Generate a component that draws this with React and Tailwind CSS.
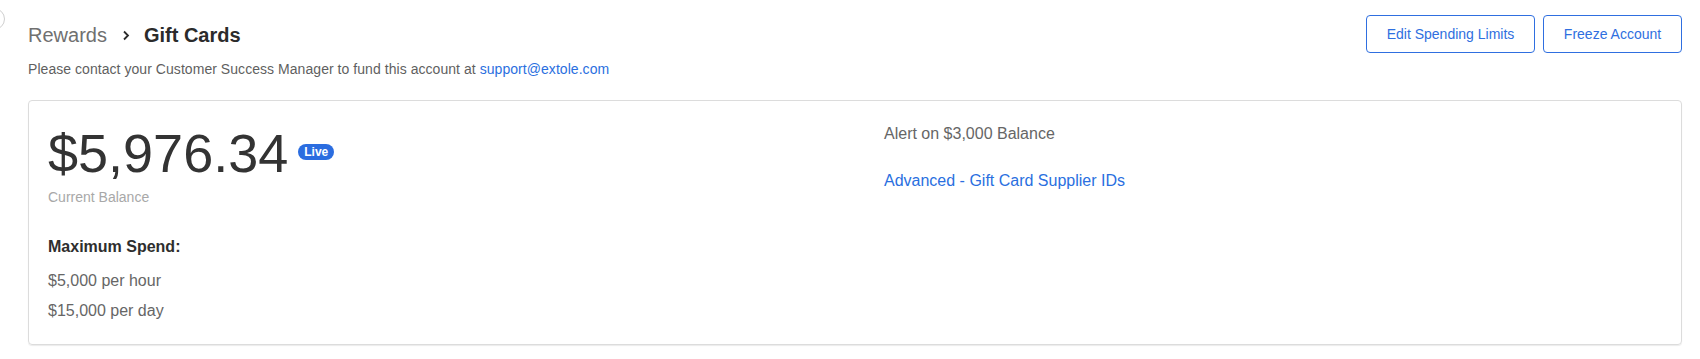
import React from 'react'

function Chevron() {
  return (
    <svg width="8" height="11" viewBox="0 0 8 11" className="ml-[15px] mr-[14px] mt-[1px]" aria-hidden="true">
      <path d="M2 1.5 L6 5.5 L2 9.5" fill="none" stroke="#2b2b2b" strokeWidth="1.8" />
    </svg>
  )
}

function App() {
  return (
    <div className="relative min-h-[359px] w-[1700px] bg-white font-['Liberation_Sans',Arial,sans-serif]">
      {/* <!-- collapse handle --> */}
      <div className="absolute left-[-17px] top-[8px] h-[22px] w-[22px] rounded-full border border-[#cfcfcf] bg-white" />

      <div className="pl-[28px] pr-[18px] pt-[15px]">
        {/* <!-- Header --> */}
        <div className="flex items-start justify-between">
          <div className="pt-[6px]">
            <div className="flex items-center text-[20px] leading-[28px]">
              <span className="text-[#707070]">Rewards</span>
              <Chevron />
              <span className="font-semibold text-[#2b2b2b]">Gift Cards</span>
            </div>
            <p className="mt-[10px] text-[14px] leading-[20px] tracking-[0.05px] text-[#5f5f5f]">
              Please contact your Customer Success Manager to fund this account at{' '}
              <a className="text-[#2a6fe0]">support@extole.com</a>
            </p>
          </div>
          <div className="flex gap-[8px]">
            <button className="h-[38px] w-[169px] rounded-[4px] border border-[#2f6fe0] text-[14px] text-[#2f6fe0]">
              Edit Spending Limits
            </button>
            <button className="h-[38px] w-[139px] rounded-[4px] border border-[#2f6fe0] text-[14px] text-[#2f6fe0]">
              Freeze Account
            </button>
          </div>
        </div>

        {/* <!-- Balance card --> */}
        <div className="mt-[21px] grid h-[245px] grid-cols-[836px_1fr] rounded-[4px] border border-[#dcdcdc] px-[19px] pt-[25px] shadow-[0_1px_1px_rgba(0,0,0,0.08)]">
          <div>
            <div className="flex items-center">
              <span className="text-[54px] leading-[54px] text-[#333333]">$5,976.34</span>
              <span className="ml-[10px] mt-[-2px] flex h-[16px] w-[36px] items-center justify-center rounded-full bg-[#2b6de0] text-[12px] font-semibold text-white">
                Live
              </span>
            </div>
            <div className="mt-[7px] text-[14px] leading-[20px] text-[#a8a8a8]">Current Balance</div>
            <div className="mt-[28px] text-[16px] font-semibold leading-[24px] text-[#2e2e2e]">Maximum Spend:</div>
            <div className="mt-[10px] text-[16px] leading-[24px] text-[#666666]">$5,000 per hour</div>
            <div className="mt-[6px] text-[16px] leading-[24px] text-[#666666]">$15,000 per day</div>
          </div>
          <div>
            <div className="mt-[-4px] text-[16px] leading-[24px] text-[#666666]">Alert on $3,000 Balance</div>
            <a className="mt-[23px] block text-[16px] leading-[24px] text-[#2a6fe0]">Advanced - Gift Card Supplier IDs</a>
          </div>
        </div>
      </div>
    </div>
  )
}

export default App
